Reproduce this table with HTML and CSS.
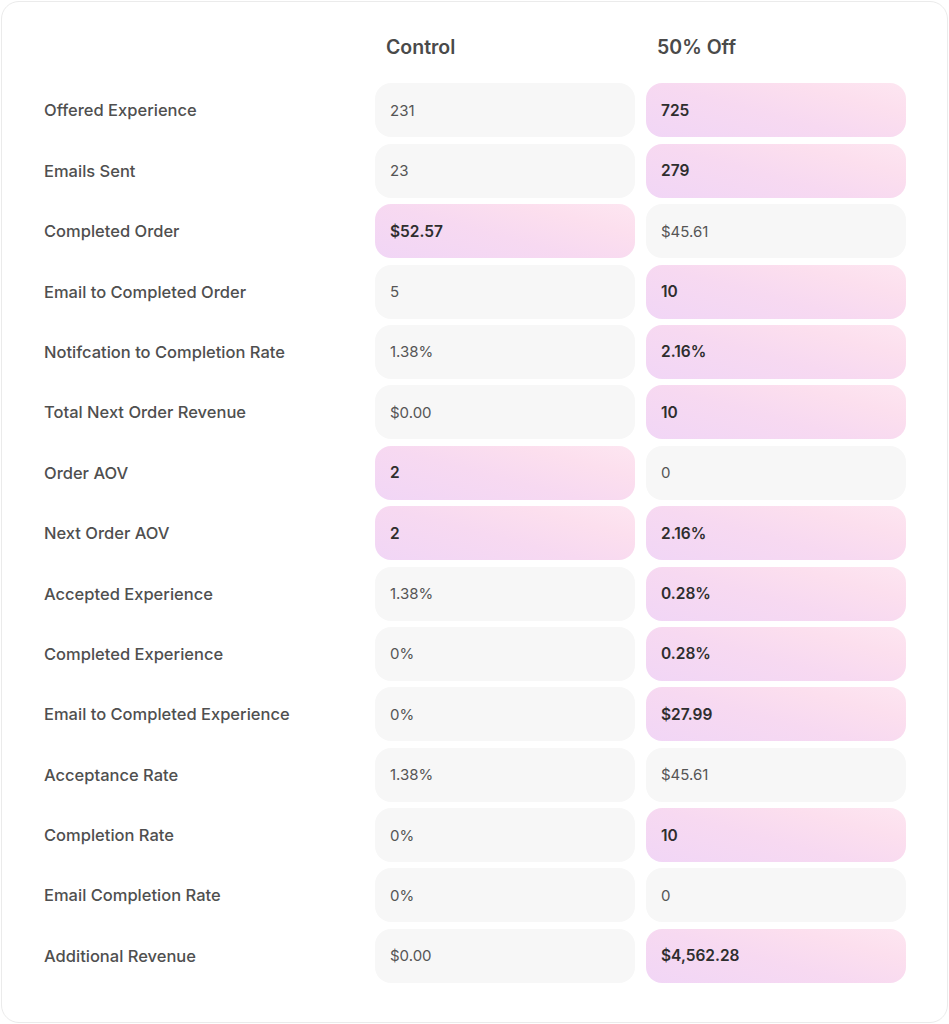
FILE: index.html
```html
<!DOCTYPE html>
<html>
<head>
<meta charset="utf-8">
<link rel="stylesheet" href="styles.css">
</head>
<body>
<div class="card">
  <div class="grid">
    <div class="head-spacer"></div>
    <div class="head">Control</div>
    <div class="head">50% Off</div>

    <div class="label">Offered Experience</div>
    <div class="cell">231</div>
    <div class="cell hi">725</div>

    <div class="label">Emails Sent</div>
    <div class="cell">23</div>
    <div class="cell hi">279</div>

    <div class="label">Completed Order</div>
    <div class="cell hi">$52.57</div>
    <div class="cell">$45.61</div>

    <div class="label">Email to Completed Order</div>
    <div class="cell">5</div>
    <div class="cell hi">10</div>

    <div class="label">Notifcation to Completion Rate</div>
    <div class="cell">1.38%</div>
    <div class="cell hi">2.16%</div>

    <div class="label">Total Next Order Revenue</div>
    <div class="cell">$0.00</div>
    <div class="cell hi">10</div>

    <div class="label">Order AOV</div>
    <div class="cell hi">2</div>
    <div class="cell">0</div>

    <div class="label">Next Order AOV</div>
    <div class="cell hi">2</div>
    <div class="cell hi">2.16%</div>

    <div class="label">Accepted Experience</div>
    <div class="cell">1.38%</div>
    <div class="cell hi">0.28%</div>

    <div class="label">Completed Experience</div>
    <div class="cell">0%</div>
    <div class="cell hi">0.28%</div>

    <div class="label">Email to Completed Experience</div>
    <div class="cell">0%</div>
    <div class="cell hi">$27.99</div>

    <div class="label">Acceptance Rate</div>
    <div class="cell">1.38%</div>
    <div class="cell">$45.61</div>

    <div class="label">Completion Rate</div>
    <div class="cell">0%</div>
    <div class="cell hi">10</div>

    <div class="label">Email Completion Rate</div>
    <div class="cell">0%</div>
    <div class="cell">0</div>

    <div class="label">Additional Revenue</div>
    <div class="cell">$0.00</div>
    <div class="cell hi">$4,562.28</div>
  </div>
</div>
</body>
</html>
```

FILE: styles.css
```css
html, body {
  margin: 0;
  padding: 0;
  background: #ffffff;
}
body {
  padding: 1px;
  font-family: Inter, "Noto Sans", sans-serif;
}
.card {
  box-sizing: border-box;
  width: 947px;
  height: 1022px;
  border: 1px solid #ebebeb;
  border-radius: 18px;
  background: #fff;
  padding: 26px 42px 0 41px;
}
.grid {
  display: grid;
  grid-template-columns: 321px 260px 260px;
  column-gap: 11px;
  row-gap: 6.4px;
  grid-template-rows: 49px;
  grid-auto-rows: 54px;
}
.head {
  font-size: 19.5px;
  font-weight: 600;
  color: #4a4a4a;
  padding-left: 11px;
  line-height: 38px;
  align-self: start;
}
.label {
  font-size: 16.5px;
  font-weight: 500;
  color: #4f4f4f;
  display: flex;
  align-items: center;
  padding-left: 1px;
}
.cell {
  background: #f7f7f7;
  border-radius: 16px;
  display: flex;
  align-items: center;
  padding-left: 15px;
  font-size: 15px;
  color: #555;
}
.cell.hi {
  background: linear-gradient(15deg, #f1d6f6 0%, #f7d9f1 45%, #fcdfee 75%, #fde6f1 100%);
  font-weight: 600;
  font-size: 15.5px;
  color: #2e2e2e;
}
```
